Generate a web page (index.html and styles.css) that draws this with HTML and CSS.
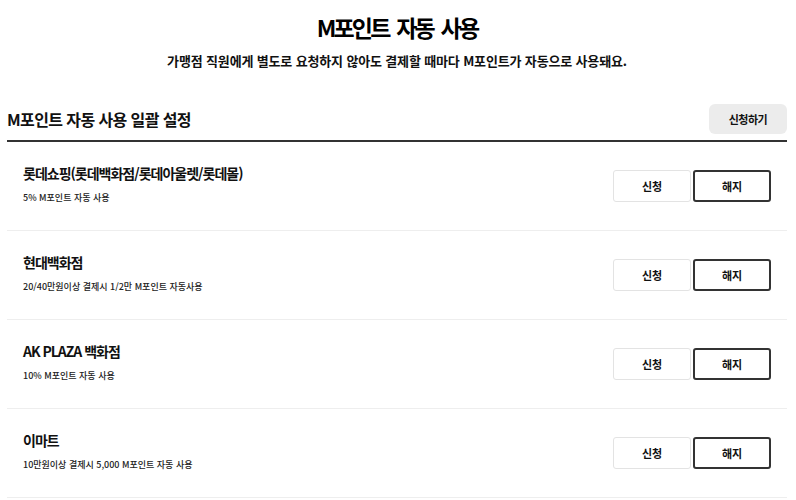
FILE: index.html
```html
<!DOCTYPE html>
<html lang="ko">
<head>
    <meta charset="UTF-8">
    <meta name="viewport" content="width=device-width, initial-scale=1.0">
    <title>M포인트 자동 사용</title>
    <link rel="stylesheet" href="styles.css">
</head>
<body>
    <div class="page">
        <!-- Page heading -->
        <div class="intro">
            <h1>M포인트 자동 사용</h1>
            <p>가맹점 직원에게 별도로 요청하지 않아도 결제할 때마다 M포인트가 자동으로 사용돼요.</p>
        </div>

        <!-- Bulk setting -->
        <div class="bulk">
            <h2>M포인트 자동 사용 일괄 설정</h2>
            <button class="bulk-btn">신청하기</button>
        </div>

        <!-- Store list -->
        <ul class="store-list">
            <li class="store">
                <div class="store-info">
                    <strong>롯데쇼핑(롯데백화점/롯데아울렛/롯데몰)</strong>
                    <span>5% M포인트 자동 사용</span>
                </div>
                <div class="store-actions">
                    <button class="btn-apply">신청</button>
                    <button class="btn-cancel">해지</button>
                </div>
            </li>
            <li class="store">
                <div class="store-info">
                    <strong>현대백화점</strong>
                    <span>20/40만원이상 결제시 1/2만 M포인트 자동사용</span>
                </div>
                <div class="store-actions">
                    <button class="btn-apply">신청</button>
                    <button class="btn-cancel">해지</button>
                </div>
            </li>
            <li class="store">
                <div class="store-info">
                    <strong>AK PLAZA 백화점</strong>
                    <span>10% M포인트 자동 사용</span>
                </div>
                <div class="store-actions">
                    <button class="btn-apply">신청</button>
                    <button class="btn-cancel">해지</button>
                </div>
            </li>
            <li class="store">
                <div class="store-info">
                    <strong>이마트</strong>
                    <span>10만원이상 결제시 5,000 M포인트 자동 사용</span>
                </div>
                <div class="store-actions">
                    <button class="btn-apply">신청</button>
                    <button class="btn-cancel">해지</button>
                </div>
            </li>
        </ul>
    </div>
</body>
</html>
```
FILE: styles.css
```css
body {
    margin: 0;
    font-family: "Noto Sans CJK KR", "Noto Sans", sans-serif;
    color: #111;
    background: #fff;
}

.page {
    width: 780px;
    margin-left: 7px;
}

.intro {
    text-align: center;
    padding-top: 12px;
}

.intro h1 {
    margin: 0;
    font-size: 23px;
    line-height: 30px;
    font-weight: 700;
    letter-spacing: -2.8px;
    word-spacing: 4px;
    color: #000;
}

.intro p {
    margin: 9px 0 0;
    font-size: 13px;
    line-height: 20px;
    font-weight: 700;
    letter-spacing: -0.15px;
}

.bulk {
    display: flex;
    justify-content: space-between;
    align-items: center;
    margin-top: 33px;
    padding-bottom: 6px;
    border-bottom: 2px solid #333;
}

.bulk h2 {
    margin: 0;
    font-size: 16px;
    line-height: 30px;
    font-weight: 700;
    letter-spacing: -0.6px;
}

.bulk-btn {
    width: 78px;
    height: 30px;
    border: none;
    border-radius: 6px;
    background: #ececec;
    font-family: inherit;
    font-size: 11px;
    font-weight: 700;
    letter-spacing: -0.5px;
    color: #111;
}

.store-list {
    list-style: none;
    margin: 0;
    padding: 0;
}

.store {
    display: flex;
    justify-content: space-between;
    align-items: center;
    height: 88px;
    padding: 0 16px;
    border-bottom: 1px solid #eee;
}

.store-info {
    display: flex;
    flex-direction: column;
    gap: 8px;
    padding-bottom: 4px;
}

.store-info strong {
    font-size: 14px;
    line-height: 20px;
    letter-spacing: -1px;
}

.store-info span {
    font-size: 9px;
    line-height: 14px;
    font-weight: 500;
    letter-spacing: 0;
    color: #222;
}

.store-actions {
    display: flex;
    gap: 2px;
}

.store-actions button {
    width: 78px;
    height: 32px;
    background: #fff;
    border-radius: 3px;
    font-family: inherit;
    font-size: 11px;
    font-weight: 700;
    color: #111;
}

.btn-apply {
    border: 1px solid #e3e3e3;
}

.btn-cancel {
    border: 2px solid #333;
}
```
